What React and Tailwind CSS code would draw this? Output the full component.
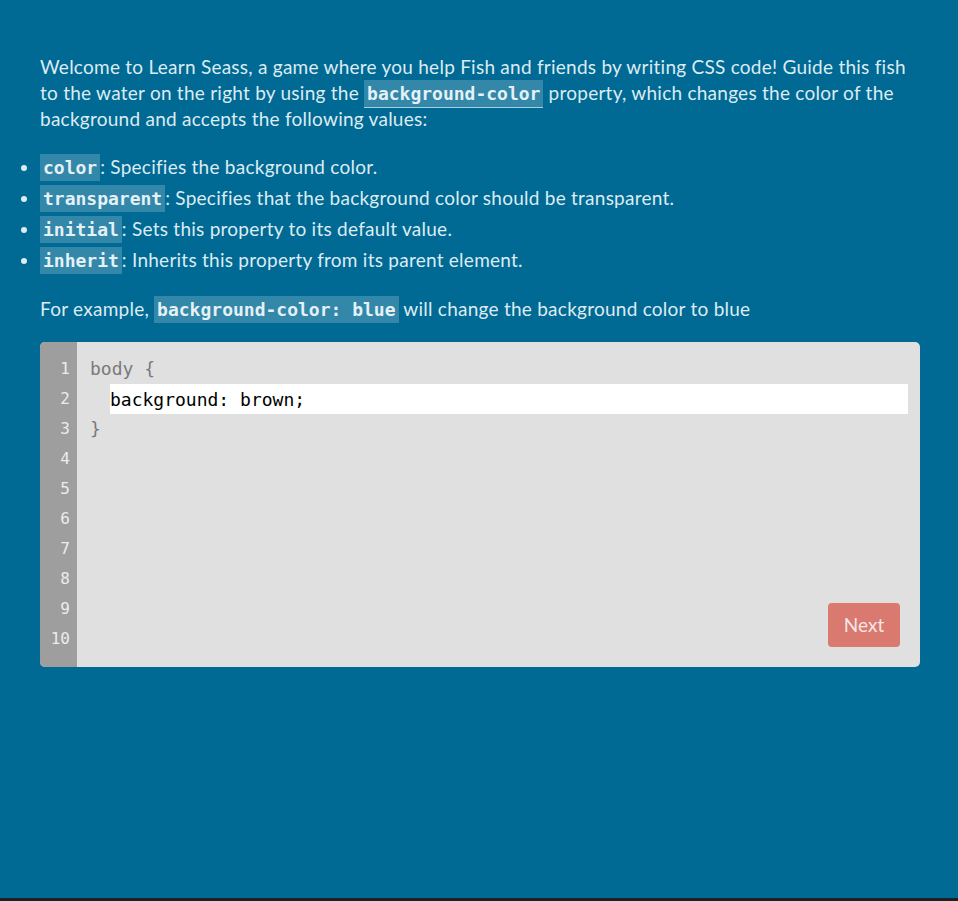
import React from "react";

const codeCls =
  "font-['DejaVu_Sans_Mono',monospace] font-bold text-[18px] tracking-normal leading-none bg-white/20 px-[3px] py-[3px] text-[#e4f1f6]";

export default function App() {
  const lines = [1, 2, 3, 4, 5, 6, 7, 8, 9, 10];

  return (
    <div className="min-h-[901px] bg-[#006994] border-b-[3px] border-[#1b2127] text-[#dcecf2] font-['Lato',sans-serif] text-[19px] leading-[26px] tracking-[0.25px]">
      <div className="pt-[54px]">
        {/* Intro */}
        <p className="px-10 w-[960px]">
          Welcome to Learn Seass, a game where you help Fish and friends by writing CSS code! Guide this
          fish to the water on the right by using the{" "}
          <code className={codeCls + " border-b border-[#a9d0de]"}>background-color</code> property,
          which changes the color of the background and accepts the following values:
        </p>

        {/* Values */}
        <ul className="list-disc pl-10 mt-[22px] flex flex-col gap-[5px]">
          <li className="h-[26px]">
            <code className={codeCls}>color</code>: Specifies the background color.
          </li>
          <li className="h-[26px]">
            <code className={codeCls}>transparent</code>: Specifies that the background color should be
            transparent.
          </li>
          <li className="h-[26px]">
            <code className={codeCls}>initial</code>: Sets this property to its default value.
          </li>
          <li className="h-[26px]">
            <code className={codeCls}>inherit</code>: Inherits this property from its parent element.
          </li>
        </ul>

        <p className="px-10 mt-[23px] h-[26px]">
          For example, <code className={codeCls}>background-color: blue</code> will change the
          background color to blue
        </p>

        {/* Editor */}
        <div className="relative mx-10 mt-5 w-[880px] h-[325px] bg-[#e0e0e0] rounded-[5px] overflow-hidden flex tracking-normal">
          <div className="w-[37px] bg-[#9e9e9e] pt-3 pr-[7px] text-right font-['DejaVu_Sans_Mono',monospace] text-[16px] text-[#ececec]">
            {lines.map((n) => (
              <div key={n} className="h-[30px] leading-[30px]">
                {n}
              </div>
            ))}
          </div>
          <div className="flex-1 pt-3 pl-[13px] pr-3 font-['DejaVu_Sans_Mono',monospace] text-[18px] text-[#7a7a7a]">
            <div className="h-[30px] leading-[30px]">body {"{"}</div>
            <div className="h-[30px] pl-5">
              <input
                type="text"
                defaultValue="background: brown;"
                className="w-full h-[30px] bg-white text-black outline-none font-['DejaVu_Sans_Mono',monospace] text-[18px]"
              />
            </div>
            <div className="h-[30px] leading-[30px]">{"}"}</div>
          </div>
          <button
            type="button"
            className="absolute right-5 bottom-5 w-[72px] h-[44px] rounded-[4px] bg-[#d97970] text-[#f6e7e6] text-[19px] font-['Lato',sans-serif]"
          >
            Next
          </button>
        </div>
      </div>
    </div>
  );
}
